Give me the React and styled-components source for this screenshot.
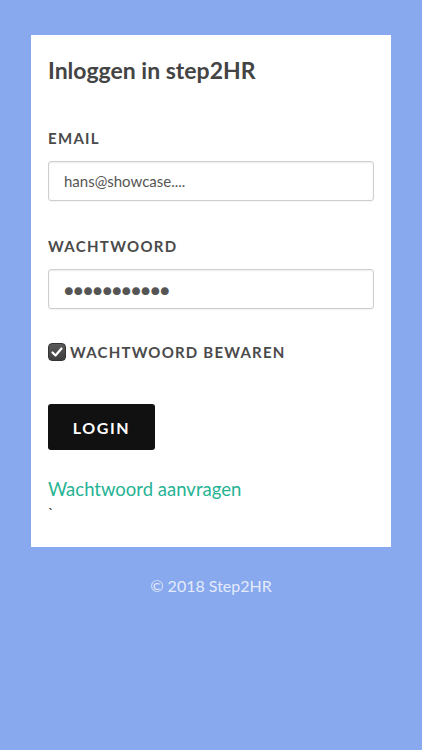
import React from "react";
import styled, { createGlobalStyle } from "styled-components";

const Global = createGlobalStyle`
  html, body { margin: 0; padding: 0; background: #88a9ee; }
  body { font-family: Lato, "Open Sans", sans-serif; }
  * { box-sizing: border-box; }
`;

const Page = styled.div`
  min-height: 750px;
  background: #88a9ee;
  padding: 35px 31px 0;
  display: flex;
  flex-direction: column;
`;

const Card = styled.div`
  background: #fff;
  height: 512px;
  padding: 20px 17px 0;
  display: flex;
  flex-direction: column;
`;

const Title = styled.h1`
  margin: 0;
  font-size: 23px;
  font-weight: 700;
  color: #444;
  line-height: 30px;
`;

const Label = styled.label`
  display: block;
  font-size: 15px;
  font-weight: 700;
  letter-spacing: 1.3px;
  color: #4a4a4a;
  line-height: 20px;
  margin-top: ${(p) => p.$mt}px;
`;

const Input = styled.div`
  margin-top: 13px;
  height: 40px;
  border: 1px solid #cfcfcf;
  border-radius: 3px;
  box-shadow: inset 0 1px 2px rgba(0,0,0,0.08), 0 1px 1px rgba(0,0,0,0.05);
  padding: 0 15px;
  display: flex;
  align-items: center;
  font-size: ${(p) => (p.$dots ? "16px" : "15px")};
  color: #555;
  letter-spacing: 0;
`;

const CheckRow = styled.div`
  margin-top: 34px;
  display: flex;
  align-items: center;
  gap: 4px;
  font-size: 15px;
  font-weight: 700;
  letter-spacing: 1.2px;
  color: #4a4a4a;
`;

const Box = styled.span`
  width: 18px;
  height: 18px;
  border-radius: 4px;
  background: linear-gradient(#5a5a5a, #3e3e3e);
  border: 1px solid #333;
  display: inline-flex;
  align-items: center;
  justify-content: center;
`;

const Button = styled.button`
  margin-top: 43px;
  width: 107px;
  height: 46px;
  background: #111;
  color: #fff;
  border: none;
  border-radius: 3px;
  font-family: Lato, sans-serif;
  font-size: 16px;
  font-weight: 700;
  letter-spacing: 1.6px;
`;

const Link = styled.a`
  margin-top: 27px;
  font-size: 18.5px;
  color: #26b394;
  text-decoration: none;
  line-height: 24px;
`;

const Tick = styled.div`
  margin-top: 6px;
  font-size: 14px;
  color: #222;
  line-height: 12px;
`;

const Footer = styled.div`
  text-align: center;
  color: #e4ebfb;
  font-size: 16px;
  margin-top: 29px;
  margin-left: -31px;
  margin-right: -31px;
`;

export default function App() {
  return (
    <>
      <Global />
      <Page>
        <Card>
          <Title>Inloggen in step2HR</Title>
          <Label $mt={43}>EMAIL</Label>
          <Input>hans@showcase....</Input>
          <Label $mt={35}>WACHTWOORD</Label>
          <Input $dots>●●●●●●●●●●●</Input>
          <CheckRow>
            <Box>
              <svg width="14" height="14" viewBox="0 0 14 14">
                <path d="M2.5 7.5 L5.5 10.5 L11.5 3.5" fill="none" stroke="#fff" strokeWidth="2.2" strokeLinecap="round" strokeLinejoin="round" />
              </svg>
            </Box>
            WACHTWOORD BEWAREN
          </CheckRow>
          <Button>LOGIN</Button>
          <Link href="#">Wachtwoord aanvragen</Link>
          <Tick>`</Tick>
        </Card>
        <Footer>© 2018 Step2HR</Footer>
      </Page>
    </>
  );
}
